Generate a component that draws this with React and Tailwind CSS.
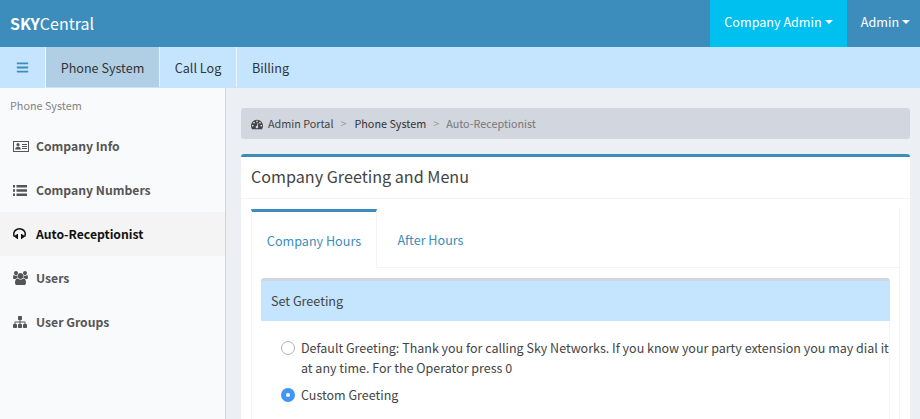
import React from "react";
import { FaBars } from "react-icons/fa";

const Caret = () => (
  <span className="ml-[3px] inline-block align-middle w-0 h-0 border-x-[4px] border-x-transparent border-t-[4px] border-t-white" />
);

const IdCard = () => (
  <svg width="16" height="11" viewBox="0 0 16 11" fill="currentColor">
    <path fillRule="evenodd" d="M0 0h16v11H0zM1 1v9h14V1z" />
    <circle cx="5" cy="3.7" r="1.6" />
    <path d="M2.2 8.5c0-2 1-2.8 2.8-2.8s2.800.8 2.800 2.800z" />
    <path d="M9 3h5v1H9zM9 5h5v1H9zM9 7h5v1H9z" />
  </svg>
);

const ListIcon = () => (
  <svg width="14" height="11" viewBox="0 0 14 11" fill="currentColor">
    <path d="M0 0h2v2.500H0zM0 4.250h2v2.500H0zM0 8.500h2V11H0zM3.500 0H14v2.500H3.500zM3.500 4.250H14v2.500H3.500zM3.500 8.500H14V11H3.500z" />
  </svg>
);

const Headphones = () => (
  <svg width="13" height="14" viewBox="0 0 1664 1792" fill="currentColor">
    <path d="M1664 890q0 166-60 314l-20 49-185 33q-22 83-90.500 136.500t-156.500 53.500v32q0 14-9 23t-23 9h-64q-14 0-23-9t-9-23v-576q0-14 9-23t23-9h64q14 0 23 9t9 23v32q71 0 130 35.500t93 95.500l68-12q29-95 29-193 0-148-88-279t-236.500-209-315.500-78-315.500 78-236.500 209-88 279q0 98 29 193l68 12q34-60 93-95.500t130-35.500v-32q0-14 9-23t23-9h64q14 0 23 9t9 23v576q0 14-9 23t-23 9h-64q-14 0-23-9t-9-23v-32q-88 0-156.500-53.500t-90.500-136.500l-185-33-20-49q-60-148-60-314 0-151 67-291t179-242.500 266-163.500 320-61 320 61 266 163.500 179 242.500 67 291z" />
  </svg>
);

const Users = () => (
  <svg width="15" height="14" viewBox="0 0 1920 1792" fill="currentColor">
    <path d="M593 896q-162 5-265 128h-134q-82 0-138-40.500t-56-118.500q0-353 124-353 6 0 43.500 21t97.500 42.500 119 21.500q67 0 133-23-5 37-5 66 0 139 81 256zm1071 637q0 120-73 189.500t-194 69.500h-874q-121 0-194-69.500t-73-189.500q0-53 3.500-103.500t14-109 26.500-108.500 43-97.500 62-81 85.500-53.500 111.500-20q10 0 43 21.500t73 48 107 48 135 21.500 135-21.500 107-48 73-48 43-21.500q61 0 111.500 20t85.500 53.500 62 81 43 97.500 26.500 108.500 14 109 3.500 103.500zm-1024-1277q0 106-75 181t-181 75-181-75-75-181 75-181 181-75 181 75 75 181zm704 384q0 159-112.500 271.500t-271.500 112.500-271.500-112.500-112.500-271.500 112.500-271.500 271.500-112.500 271.500 112.500 112.500 271.500zm576 225q0 78-56 118.500t-138 40.500h-134q-103-123-265-128 81-117 81-256 0-29-5-66 66 23 133 23 59 0 119-21.500t97.500-42.500 43.500-21q124 0 124 353zm-128-609q0 106-75 181t-181 75-181-75-75-181 75-181 181-75 181 75 75 181z" />
  </svg>
);

const Sitemap = () => (
  <svg width="14" height="14" viewBox="0 0 1792 1792" fill="currentColor">
    <path d="M1792 1248v320q0 40-28 68t-68 28h-320q-40 0-68-28t-28-68v-320q0-40 28-68t68-28h96v-192h-512v192h96q40 0 68 28t28 68v320q0 40-28 68t-68 28h-320q-40 0-68-28t-28-68v-320q0-40 28-68t68-28h96v-192h-512v192h96q40 0 68 28t28 68v320q0 40-28 68t-68 28h-320q-40 0-68-28t-28-68v-320q0-40 28-68t68-28h96v-192q0-52 38-90t90-38h512v-192h-96q-40 0-68-28t-28-68v-320q0-40 28-68t68-28h320q40 0 68 28t28 68v320q0 40-28 68t-68 28h-96v192h512q52 0 90 38t38 90v192h96q40 0 68 28t28 68z" />
  </svg>
);

const Tachometer = () => (
  <svg width="12" height="12" viewBox="0 0 1792 1792" fill="currentColor" className="mr-[5px]">
    <path d="M384 1152q0-53-37.500-90.500t-90.500-37.500-90.500 37.500-37.500 90.500 37.500 90.500 90.500 37.500 90.500-37.500 37.500-90.500zm192-448q0-53-37.500-90.500t-90.500-37.500-90.500 37.500-37.500 90.500 37.500 90.500 90.500 37.500 90.500-37.500 37.500-90.500zm428 481l101-382q6-26-7.500-48.500t-38.500-29.500-48 6.500-30 39.500l-101 382q-60 5-107 43.500t-63 98.500q-20 77 20 146t117 89 146-20 89-117q16-60-6-117t-72-91zm660-33q0-53-37.500-90.500t-90.500-37.500-90.500 37.500-37.500 90.500 37.500 90.500 90.500 37.500 90.500-37.500 37.500-90.500zm-640-640q0-53-37.500-90.500t-90.500-37.500-90.500 37.500-37.500 90.500 37.500 90.500 90.500 37.500 90.500-37.500 37.500-90.500zm448 192q0-53-37.500-90.500t-90.500-37.500-90.500 37.500-37.500 90.500 37.500 90.500 90.500 37.500 90.500-37.500 37.500-90.500zm320 448q0 261-141 483-19 29-54 29h-1402q-35 0-54-29-141-221-141-483 0-182 71-348t191-286 286-191 348-71 348 71 286 191 191 286 71 348z" />
  </svg>
);

const items = [
  { label: "Company Info", Icon: IdCard },
  { label: "Company Numbers", Icon: ListIcon },
  { label: "Auto-Receptionist", Icon: Headphones, active: true },
  { label: "Users", Icon: Users },
  { label: "User Groups", Icon: Sitemap },
];

export default function App() {
  return (
    <div className="w-[920px] h-[419px] overflow-hidden flex flex-col bg-[#ecf0f5] text-[12.6px] leading-[20px] text-[#444] font-['Noto_Sans_CJK_SC','Noto_Sans',sans-serif]">
      <header className="h-[47px] shrink-0 bg-[#3c8dbc] flex items-center text-white pb-[1px]">
        <div className="pl-[10px] text-[16px] flex-1 pb-[1px]">
          <b>SKY</b>Central
        </div>
        <div className="h-[47px] w-[137px] bg-[#00c0ef] flex items-center justify-center pb-[2px]">Company Admin<Caret /></div>
        <div className="h-[47px] w-[73px] flex items-center justify-center pb-[2px] pl-[4px]">Admin<Caret /></div>
      </header>

      <nav className="h-[41px] shrink-0 bg-[#c5e5ff] flex text-[#333]">
        <div className="w-[46px] flex items-center justify-center border-r border-white/70 text-[#3c8dbc]">
          <FaBars size={13} />
        </div>
        <div className="w-[114px] h-[40px] pt-[1px] flex items-center justify-center bg-[#b0cfe5] border-r border-white/70 ">Phone System</div>
        <div className="w-[77px] h-[40px] pt-[1px] flex items-center justify-center border-r border-white/70">Call Log</div>
        <div className="w-[67px] h-[40px] pt-[1px] flex items-center justify-center">Billing</div>
      </nav>

      <div className="flex flex-1 min-h-0">
        <aside className="w-[226px] shrink-0 bg-[#f9fafc] border-r border-[#d2d6de]">
          <div className="h-[36px] pl-[10px] pt-[9px] text-[10.8px] leading-[16px] text-[#848484]">Phone System</div>
          {items.map(({ label, Icon, active }) => (
            <div key={label} className={`h-[44px] flex items-center pl-[13px] text-[12.2px] font-bold ${active ? "bg-[#f4f4f5] text-[#111]" : "text-[#555]"}`}>
              <span className="w-[23px] shrink-0 flex items-center"><Icon /></span>
              {label}
            </div>
          ))}
        </aside>

        <main className="flex-1 min-w-0 pt-[20px] pl-[15px] pr-[10px]">
          <div className="h-[31px] rounded-[3px] bg-[#d2d6de] flex items-center pl-[10px] text-[10.8px] text-[#444]">
            <Tachometer />
            <span className="pb-[2px]">Admin Portal</span>
            <span className="ml-[7px] mr-[8px] pb-[2px] text-[#999]">&gt;</span>
            <span className="text-[#333] pb-[2px]">Phone System</span>
            <span className="mx-[7px] pb-[2px] text-[#999]">&gt;</span>
            <span className="text-[#777] pb-[2px]">Auto-Receptionist</span>
          </div>

          <section className="mt-[15px] bg-white rounded-[3px] border-t-[3px] border-[#3c8dbc] h-[400px]">
            <div className="h-[42px] pl-[10px] pb-[3px] flex items-center text-[16.15px] border-b border-[#f4f4f4]">Company Greeting and Menu</div>
            <div className="pt-[10px] pl-[10px] pr-[10px]">
              <div className="flex h-[59px] border-b border-[#f4f4f4] border-r">
                <div className="w-[126px] h-[59px] pt-[1px] bg-white border-t-[3px] border-t-[#3c8dbc] border-x border-x-[#f4f4f4] flex items-center justify-center text-[#3c8dbc]">Company Hours</div>
                <div className="w-[107px] pt-[4px] flex items-center justify-center text-[#3c8dbc]">After Hours</div>
              </div>
              <div className="border-x border-[#f4f4f4] pl-[9px] pr-[9px] pt-[10px] h-[300px]">
                <div className="border-t-[3px] border-[#d2d6de] rounded-t-[3px]">
                  <div className="h-[40px] bg-[#c5e5ff] flex items-center pl-[10px]">Set Greeting</div>
                  <div className="border-r border-[#f4f4f4] pl-[20px] pt-[17px] h-[200px] text-[12.5px]">
                    <label className="flex">
                      <span className="w-[14px] h-[14px] mt-[3px] mr-[6px] shrink-0 rounded-full border border-[#b3b3b3] bg-white" />
                      <span>Default Greeting: Thank you for calling Sky Networks. If you know your party extension you may dial it at any time. For the Operator press 0</span>
                    </label>
                    <label className="flex mt-[7px]">
                      <span className="w-[14px] h-[14px] mt-[3px] mr-[6px] shrink-0 rounded-full bg-[#3f96f5] flex items-center justify-center">
                        <span className="w-[4px] h-[4px] rounded-full bg-white" />
                      </span>
                      <span>Custom Greeting</span>
                    </label>
                  </div>
                </div>
              </div>
            </div>
          </section>
        </main>
      </div>
    </div>
  );
}
